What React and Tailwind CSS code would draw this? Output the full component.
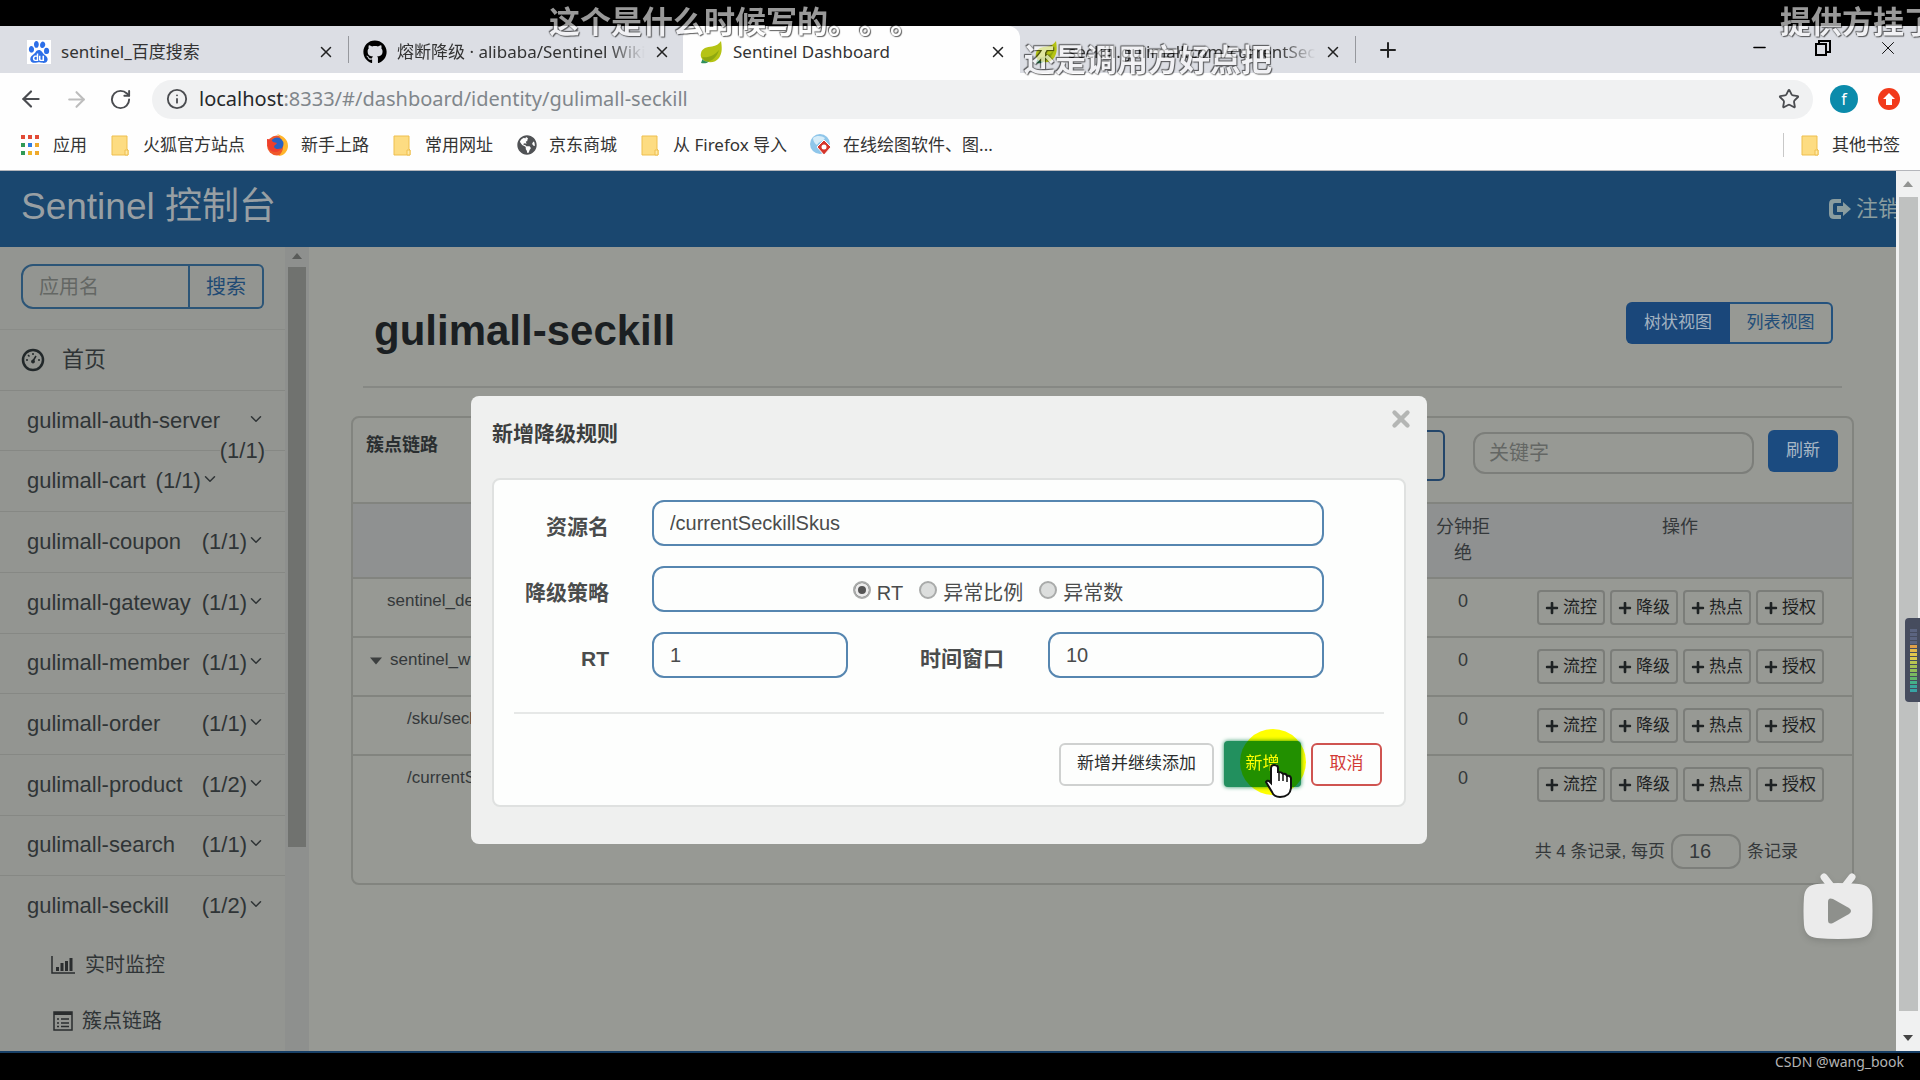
import React, { useState } from 'react';
import { ArrowLeft, ArrowRight, RotateCw, Info, Star, X, Plus, Minus, ChevronDown } from 'lucide-react';
import { FaGithub, FaGlobeAmericas, FaPlus } from 'react-icons/fa';
import { SiBaidu } from 'react-icons/si';

const APPS = [
    { name: 'gulimall-auth-server', count: '(1/1)', wrap: true },
    { name: 'gulimall-cart', count: '(1/1)', inline: true },
    { name: 'gulimall-coupon', count: '(1/1)' },
    { name: 'gulimall-gateway', count: '(1/1)' },
    { name: 'gulimall-member', count: '(1/1)' },
    { name: 'gulimall-order', count: '(1/1)' },
    { name: 'gulimall-product', count: '(1/2)' },
    { name: 'gulimall-search', count: '(1/1)' },
];

const RESOURCES = [
    { name: 'sentinel_de', pad: 'pl-[34px]' },
    { name: 'sentinel_w', pad: 'pl-[17px]', parent: true },
    { name: '/sku/seck', pad: 'pl-[54px]' },
    { name: '/currentS', pad: 'pl-[54px]' },
];

const ACTIONS = ['流控', '降级', '热点', '授权'];
const STRATEGIES = ['RT', '异常比例', '异常数'];
const METER = ['#5b6480', '#5b6480', '#5b6480', '#5b6480', '#e0a04a', '#e0b84a', '#e0c64c', '#d9c94e', '#b9c452', '#a5c055', '#93bd57', '#7ab960', '#62b56a', '#45b089', '#3aa79c', '#38a3a5'];

const Leaf = () => (
    <svg viewBox="0 0 24 24" className="size-6 shrink-0">
        <path d="M22 1c1 6 1.500 12-2 17-3 4-8 5-13 3.500C3 20 1 17 2 13 3 8 8 7 13 6.500 17 6 20 4 22 1z" fill="#b5c314" />
        <path d="M3 17c6 1 12-1 17-7-2 7-7 12-14 11.500L3 17z" fill="#8fa80f" />
        <path d="M2 23c3 .8 6 .3 8-1.500-3 .3-5-.5-6.500-2.500z" fill="#2f8f5b" />
    </svg>
);

const Folder = () => (
    <svg viewBox="0 0 18 21" className="h-[21px] w-[18px] shrink-0">
        <path d="M1 1h15v13l1 1v5H1z" fill="#fddc82" stroke="#eebf4f" />
        <path d="M14 15h3v5h-3z" fill="#ffe9a8" stroke="#eebf4f" />
    </svg>
);

const AppsGrid = () => (
    <svg viewBox="0 0 18 20" className="h-5 w-[18px] shrink-0">
        {['#e24a36', '#e24a36', '#e24a36', '#2f9a56', '#2f7de0', '#efa92c', '#2f9a56', '#efb52c', '#efa92c'].map((c, i) => (
            <rect key={i} x={(i % 3) * 7} y={Math.floor(i / 3) * 8} width="4" height="4" fill={c} />
        ))}
    </svg>
);

const Firefox = () => (
    <svg viewBox="0 0 24 24" className="size-6 shrink-0">
        <circle cx="12" cy="12.500" r="10" fill="#f0582a" />
        <path d="M12 1c6 2 11 5 11 12 0 5-4 10-10 10C20 19 20 8 12 1z" fill="#ffb52b" />
        <circle cx="12" cy="11" r="6.500" fill="#2862c4" />
        <path d="M2 6c3 0 5 1 6 3l4 1c-1 2-3 2-3 4 2 3 5 2 7 1-1 5-10 6-13-1-1-3-1-5-1-8z" fill="#ee3f2c" />
    </svg>
);

const DrawTool = () => (
    <svg viewBox="0 0 24 24" className="size-6 shrink-0">
        <circle cx="11" cy="11" r="10" fill="#8fc6ea" />
        <path d="M4 5c4-3 9-2 12 0-2 4-6 3-8 7-2-1-4-4-4-7z" fill="#d6ecf8" />
        <path d="M15 7l7 7-7 8-7-8z" fill="#d4362c" stroke="#fff" />
        <circle cx="15" cy="14" r="2.500" fill="#fff" />
    </svg>
);

const LogoutIcon = () => (
    <svg viewBox="0 0 24 22" className="h-[22px] w-6 shrink-0" fill="currentColor">
        <path d="M13 1v4H7Q5 5 5 7v8q0 2 2 2h6v4H6q-5 0-5-5V6q0-5 5-5z" />
        <path d="M9 8h6V4l8 7-8 7v-4H9z" />
    </svg>
);

const Gauge = () => (
    <svg viewBox="0 0 24 24" className="size-6 shrink-0" fill="none" stroke="#22282a">
        <circle cx="12" cy="12" r="10" strokeWidth="2.500" />
        <path d="M12 13l3-5" strokeWidth="1.500" />
        <path d="M5 12h2M17 12h2M7 7l1.500 1.500M12 5v2" strokeWidth="1.500" />
        <circle cx="12" cy="13.500" r="1.500" fill="#22282a" />
    </svg>
);

const Bars = () => (
    <svg viewBox="0 0 24 18" className="h-[18px] w-6 shrink-0" fill="none" stroke="#2a2d2e">
        <path d="M1 0v17h23" strokeWidth="1.500" />
        <path d="M6.500 15v-4M11 15V7M15.500 15V5M20 15V2" strokeWidth="3" />
    </svg>
);

const ListIcon = () => (
    <svg viewBox="0 0 20 20" className="size-5 shrink-0" fill="none" stroke="#2a2d2e">
        <path d="M1 1h18v18H1z" strokeWidth="1.500" />
        <path d="M1 2.500h18" strokeWidth="3" />
        <path d="M4 8h2M4 12h2M4 15.500h2M8 8h8M8 12h8M8 15.500h8" strokeWidth="1.500" />
    </svg>
);

const Triangle = ({ className }) => (
    <svg viewBox="0 0 10 6" className={className} fill="currentColor"><path d="M0 6L5 0l5 6z" /></svg>
);

const HandCursor = () => (
    <svg viewBox="0 0 28 36" className="absolute top-[22px] left-[41px] z-10 h-9 w-7">
        <path
            d="M9 2q-3 0-3 3v15l-2-2q-2-1-3 1l6 10q2 5 8 5 10 0 11-9V15q-1-3-4-2-1-3-4-2-1-2-5-2V5q0-3-4-3z"
            fill="#fff" stroke="#111" strokeWidth="2"
        />
        <path d="M14 10v8M18 12v6M22 13v6" stroke="#111" strokeWidth="1.500" />
    </svg>
);

const TvBadge = () => (
    <svg viewBox="0 0 70 66" className="absolute top-[702px] right-[47px] z-20 h-[66px] w-[70px] drop-shadow-md">
        <path d="M21 4l7 9M49 4l-7 9" stroke="#ebebeb" strokeWidth="7" strokeLinecap="round" />
        <path d="M14 11q21-2 42 0 12 1 13 13 1 14 0 28-1 12-13 13-21 2-42 0Q2 64 1 52 0 38 1 24q1-12 13-13z" fill="#ebebeb" />
        <path d="M25 29q0-5 5-3l16 9q4 3 0 6l-16 9q-5 2-5-3z" fill="#8e908c" />
    </svg>
);

const Tab = ({ icon, title, fade }) => (
    <>
        {icon}
        <span className={`ml-2.5 flex-1 overflow-hidden whitespace-nowrap ${fade ? 'mask-r-from-85%' : ''}`}>{title}</span>
        <button type="button" aria-label="关闭标签页" className="ml-2 shrink-0 text-[#222]"><X size={18} strokeWidth={2} /></button>
    </>
);

const Browser = () => (
    <header className="shrink-0 bg-[#fefefe] font-['Noto_Sans','Noto_Sans_CJK_SC',sans-serif] text-[#333]">
        <div className="flex h-[47px] items-stretch bg-[#dcdee4] text-[17px] leading-6">
            <div className="flex w-[348px] items-center pt-1 pr-[13px] pl-[27px]">
                <Tab icon={<SiBaidu size={24} className="shrink-0 bg-white p-px text-[#2d6fe8]" />} title="sentinel_百度搜索" />
            </div>
            <div className="my-2.5 w-px bg-[#96989d]"></div>
            <div className="flex w-[334px] items-center pt-1 pr-[12px] pl-[14px]">
                <Tab icon={<FaGithub size={24} className="shrink-0 text-black" />} title="熔断降级 · alibaba/Sentinel Wiki" fade />
            </div>
            <div className="flex w-[337px] items-center rounded-t-xl bg-[#fefefe] pt-1 pr-[13px] pl-[16px]">
                <Tab icon={<Leaf />} title="Sentinel Dashboard" />
            </div>
            <div className="flex w-[335px] items-center pt-1 pr-[13px] pl-[14px]">
                <Tab icon={<Leaf />} title="seckill.gulimall.com/currentSeck" fade />
            </div>
            <div className="my-2.5 w-px bg-[#96989d]"></div>
            <button type="button" aria-label="新标签页" className="ml-5 text-[#222]"><Plus size={24} strokeWidth={2} /></button>
            <div className="ml-auto flex items-center gap-[46px] pr-[21px] pb-1 text-black">
                <button type="button" aria-label="最小化"><Minus size={19} strokeWidth={2} /></button>
                <button type="button" aria-label="还原">
                    <svg viewBox="0 0 16 16" className="size-4" fill="none" stroke="currentColor" strokeWidth="2">
                        <path d="M1 4h10v11H1zM4 4V1h11v11h-4" />
                    </svg>
                </button>
                <button type="button" aria-label="关闭"><X size={22} strokeWidth={1} /></button>
            </div>
        </div>

        <div className="flex h-[52px] items-center pl-[18px] text-[#4a4c50]">
            <button type="button" aria-label="后退"><ArrowLeft size={26} /></button>
            <button type="button" aria-label="前进" className="ml-5 text-[#bdbdbd]"><ArrowRight size={25} /></button>
            <button type="button" aria-label="刷新页面" className="ml-5"><RotateCw size={23} strokeWidth={2} /></button>
            <div className="ml-5 flex h-[39px] flex-1 items-center rounded-full bg-[#f0f1f2] pr-[13px] pl-[14px]">
                <Info size={22} className="shrink-0" />
                <p className="ml-[11px] flex-1 text-[20px] leading-7 whitespace-nowrap text-[#80868b]">
                    <span className="text-[#26282b]">localhost</span>:8333/#/dashboard/identity/gulimall-seckill
                </p>
                <button type="button" aria-label="收藏"><Star size={22} strokeWidth={2} /></button>
            </div>
            <span className="ml-[17px] flex size-7 items-center justify-center rounded-full bg-[#0b8bab] text-[16px] leading-6 text-white">f</span>
            <span className="mr-5 ml-5 flex size-[22px] items-center justify-center rounded-full bg-[#f23a1b]">
                <svg viewBox="0 0 12 12" className="size-3" fill="#fff"><path d="M6 0l6 6H9v6H3V6H0z" /></svg>
            </span>
        </div>

        <nav className="flex h-[46px] items-center border-b border-[#b4b6bb] pr-5 pb-[5px] pl-[21px] text-[17px] leading-6 whitespace-nowrap">
            <a href="#" className="flex items-center gap-3.5"><AppsGrid />应用</a>
            <a href="#" className="ml-6 flex items-center gap-3.5"><Folder />火狐官方站点</a>
            <a href="#" className="ml-5 flex items-center gap-3"><Firefox />新手上路</a>
            <a href="#" className="ml-6 flex items-center gap-3.5"><Folder />常用网址</a>
            <a href="#" className="ml-6 flex items-center gap-3"><FaGlobeAmericas size={20} className="text-[#505255]" />京东商城</a>
            <a href="#" className="ml-6 flex items-center gap-3.5"><Folder />从 Firefox 导入</a>
            <a href="#" className="ml-[22px] flex items-center gap-2.5"><DrawTool />在线绘图软件、图...</a>
            <a href="#" className="ml-auto flex items-center gap-[13px] border-l border-[#c8c8c8] pl-[17px]"><Folder />其他书签</a>
        </nav>
    </header>
);

const Sidebar = () => (
    <aside className="flex shrink-0 overflow-hidden bg-[#939591] text-[22px] leading-[30px] text-[#2f3436]">
        <div className="w-[285px]">
            <div className="mt-[17px] ml-[21px] flex h-[45px] w-[243px] text-[20px]">
                <input aria-label="应用名" placeholder="应用名" className="w-[169px] rounded-l-xl border-2 border-[#2c5577] bg-transparent px-4 placeholder:text-[#646764]" />
                <button type="button" className="flex-1 rounded-r-md border-2 border-l-0 border-[#2c5577] text-[#1f4a74]">搜索</button>
            </div>
            <nav className="mt-5 flex h-[607px] flex-col">
                <a href="#" className="flex flex-1 items-center gap-[17px] border-t border-[#8a8c88] pl-[21px]"><Gauge />首页</a>
                {APPS.map((app) => (
                    <a key={app.name} href="#" className="flex flex-1 items-center border-t border-[#868884] pr-5 pl-[27px] whitespace-nowrap">
                        {app.name}
                        {app.wrap ? (
                            <span className="relative ml-auto">
                                <ChevronDown size={18} className="mb-1" />
                                <span className="absolute top-[26px] right-0 bg-[#939591]">{app.count}</span>
                            </span>
                        ) : (
                            <span className={`flex items-center ${app.inline ? 'ml-2.5' : 'ml-auto'}`}>
                                {app.count}<ChevronDown size={18} className="mb-1" />
                            </span>
                        )}
                    </a>
                ))}
                <a href="#" className="flex flex-1 items-center border-t border-[#868884] pr-5 pl-[27px]">
                    gulimall-seckill
                    <span className="ml-auto flex items-center">(1/2)<ChevronDown size={18} className="mb-1" /></span>
                </a>
            </nav>
            <div className="text-[20px]">
                <a href="#" className="mt-3.5 flex h-[30px] items-center gap-2.5 pl-[51px]"><Bars />实时监控</a>
                <a href="#" className="mt-[26px] flex h-[30px] items-center gap-[9px] pl-[53px]"><ListIcon />簇点链路</a>
            </div>
        </div>
        <div className="flex w-6 flex-col items-center bg-[#8e908e]">
            <Triangle className="mt-1.5 mb-2 h-1.5 w-2.5 shrink-0 text-[#5a5c5a]" />
            <div className="h-[580px] w-[18px] shrink-0 bg-[#70726f]"></div>
        </div>
    </aside>
);

const Content = () => (
    <main className="flex-1 overflow-hidden bg-[#979994] px-[42px] text-[18px] leading-[26px] text-[#34383a]">
        <div className="mx-3 flex h-[141px] items-start justify-between border-b-2 border-[#868884] pt-[55px] pr-[9px] pl-[11px]">
            <h1 className="mt-1 text-[42px] leading-[50px] font-bold text-[#1b1f22]">gulimall-seckill</h1>
            <div className="flex h-[42px] text-[17px]">
                <button type="button" className="w-[104px] rounded-l-md bg-[#1a477a] text-[#a3b2c0]">树状视图</button>
                <button type="button" className="w-[103px] rounded-r-md border-2 border-l-0 border-[#24527e] text-[#224d78]">列表视图</button>
            </div>
        </div>

        <section className="mt-7 h-[469px] rounded-lg border-2 border-[#82847f]">
            <div className="flex h-[84px] items-start pt-3 pr-3.5 pl-[13px]">
                <h2 className="mt-0.5 text-[18px] font-bold text-[#2a2e30]">簇点链路</h2>
                <select aria-label="机器" className="mr-7 ml-auto h-[51px] w-[320px] appearance-none rounded-md border-2 border-[#24466a]"></select>
                <input aria-label="关键字" placeholder="关键字" className="mt-0.5 mr-3.5 h-[42px] w-[281px] rounded-xl border-2 border-[#7c7e7a] bg-transparent px-3.5 text-[20px] placeholder:text-[#646764]" />
                <button type="button" className="h-[42px] w-[70px] rounded-md bg-[#1b4b80] text-[17px] text-[#a9b8c6]">刷新</button>
            </div>
            <table className="w-full table-fixed border-collapse">
                <thead>
                    <tr className="h-[75px] border-y-2 border-[#82847f] bg-[#8f9191] align-top">
                        <th></th>
                        <th className="w-[90px] px-4 pt-2.5 font-normal">分钟拒绝</th>
                        <th className="w-[344px] pt-2.5 font-normal">操作</th>
                    </tr>
                </thead>
                <tbody>
                    {RESOURCES.map((row) => (
                        <tr key={row.name} className="h-[59px] border-b-2 border-[#82847f] align-top last:border-b-0">
                            <td className={`pt-[9px] text-[17px] ${row.pad}`}>
                                {row.parent && <Triangle className="mr-2 inline h-3 w-3 rotate-180 text-[#3c3f3f]" />}
                                {row.name}
                            </td>
                            <td className="pt-[9px] text-center">0</td>
                            <td className="pt-[11px] pl-[29px]">
                                <div className="flex gap-[5px]">
                                    {ACTIONS.map((action) => (
                                        <button key={action} type="button" className="flex h-[35px] w-[68px] items-center justify-center gap-1 rounded border-2 border-[#7b7d79] text-[17px] text-[#1e2223]">
                                            <FaPlus size={14} />{action}
                                        </button>
                                    ))}
                                </div>
                            </td>
                        </tr>
                    ))}
                </tbody>
            </table>
            <div className="mt-5 flex items-center justify-end gap-1.5 pr-[54px] text-[17px]">
                <label htmlFor="page-size">共 4 条记录, 每页</label>
                <input id="page-size" defaultValue="16" className="h-[35px] w-[70px] rounded-xl border-2 border-[#7c7e7a] bg-transparent pl-4 text-[20px]" />
                <span>条记录</span>
            </div>
        </section>
    </main>
);

const RuleModal = () => {
    const [strategy, setStrategy] = useState('RT');

    return (
        <div role="dialog" aria-labelledby="rule-title" className="relative h-[448px] w-[956px] rounded-lg bg-[#eff0ef] px-[21px] pt-[22px] text-[20px] leading-[30px] text-[#4a4c4c]">
            <h2 id="rule-title" className="h-[60px] text-[21px] leading-8 font-bold text-[#3c3e3e]">新增降级规则</h2>
            <button type="button" aria-label="关闭对话框" className="absolute top-[10px] right-[13px] text-[#b4b6b4]"><X size={26} strokeWidth={4} /></button>

            <form onSubmit={(e) => e.preventDefault()} className="h-[329px] rounded-lg border-2 border-[#dfe1e0] bg-[#fdfefd] px-5 pt-5">
                <div className="flex items-center">
                    <label htmlFor="resource" className="mt-2 w-[95px] text-right text-[21px] font-bold">资源名</label>
                    <input id="resource" defaultValue="/currentSeckillSkus" className="ml-[43px] h-[46px] w-[672px] rounded-xl border-2 border-[#5686b0] px-4" />
                </div>
                <fieldset className="mt-5 flex items-center">
                    <legend className="sr-only">降级策略</legend>
                    <span className="mt-2 w-[95px] text-right text-[21px] font-bold">降级策略</span>
                    <div className="ml-[43px] flex h-[46px] w-[672px] items-center justify-center gap-4 rounded-xl border-2 border-[#5686b0]">
                        {STRATEGIES.map((name) => (
                            <label key={name} className="flex items-center gap-1.5 pt-2">
                                <input
                                    type="radio"
                                    name="strategy"
                                    checked={strategy === name}
                                    onChange={() => setStrategy(name)}
                                    className="mb-1.5 size-[18px] appearance-none rounded-full border-2 border-[#a9abaa] bg-[#dcdedd] checked:bg-[#555] checked:inset-ring-3 checked:inset-ring-[#ececec]"
                                />
                                {name}
                            </label>
                        ))}
                    </div>
                </fieldset>
                <div className="mt-5 flex items-center">
                    <label htmlFor="rt" className="mt-2 w-[95px] text-right text-[21px] font-bold">RT</label>
                    <input id="rt" defaultValue="1" className="ml-[43px] h-[46px] w-[196px] rounded-xl border-2 border-[#5686b0] px-4" />
                    <label htmlFor="window" className="mt-2 ml-[72px] text-[21px] font-bold">时间窗口</label>
                    <input id="window" defaultValue="10" className="ml-auto mr-[60px] h-[46px] w-[276px] rounded-xl border-2 border-[#5686b0] px-4" />
                </div>

                <div className="mt-[34px] flex items-center justify-end gap-2.5 border-t-2 border-[#e6e8e7] pt-[27px] pr-0.5 text-[17px]">
                    <button type="button" className="h-[43px] w-[155px] rounded-md border-2 border-[#cfd1d0] text-[#2c2e2e]">新增并继续添加</button>
                    <div className="relative isolate">
                        <button type="submit" className="h-[46px] w-[77px] rounded bg-[#22905e] text-white shadow-[0_0_4px_#22905e]">新增</button>
                        <span className="pointer-events-none absolute -top-3 left-4 size-[66px] rounded-full bg-[#ffff00] mix-blend-multiply"></span>
                        <HandCursor />
                    </div>
                    <button type="button" className="h-[43px] w-[71px] rounded-md border-2 border-[#cf5450] text-[#d23a36]">取消</button>
                </div>
            </form>
        </div>
    );
};

const Danmaku = ({ className, children }) => (
    <p className={`pointer-events-none absolute z-30 text-[31px] leading-9 font-bold whitespace-nowrap text-white opacity-60 [text-shadow:0_0_2px_#000,1px_1px_1px_#000,-1px_-1px_1px_#000] [text-spacing-trim:space-all] ${className}`}>
        {children}
    </p>
);

const App = () => {
    return (
        <div className="relative flex h-screen flex-col overflow-hidden bg-black pt-[26px] font-['Liberation_Sans','Noto_Sans_CJK_SC',sans-serif]">
            <Browser />

            <div className="relative flex min-h-0 flex-1 border-b-2 border-[#173f66]">
                <div className="flex min-w-0 flex-1 flex-col">
                    <div className="flex h-[76px] shrink-0 items-center justify-between bg-[#1a476f] pl-[21px] text-[#989fa3]">
                        <span className="pb-1 text-[37px] leading-[48px]">Sentinel 控制台</span>
                        <a href="#" className="flex w-[68px] items-center gap-1 overflow-hidden text-[22px] leading-8 whitespace-nowrap text-[#8a9d9f]"><LogoutIcon />注销</a>
                    </div>
                    <div className="flex min-h-0 flex-1">
                        <Sidebar />
                        <Content />
                    </div>
                </div>

                {/* Page scrollbar */}
                <div className="flex w-6 shrink-0 flex-col items-center bg-[#f0f1f1] pb-2.5">
                    <Triangle className="my-2.5 h-1.5 w-2.5 text-[#929492]" />
                    <div className="mb-6 w-[19px] flex-1 bg-[#bfc1c0]"></div>
                    <Triangle className="h-1.5 w-2.5 rotate-180 text-[#444]" />
                </div>

                <div className="absolute inset-y-0 right-[22px] left-0 flex items-start justify-center pt-[225px]">
                    <RuleModal />
                </div>

                <TvBadge />
                <div className="absolute top-[447px] right-0 flex h-[84px] w-[15px] flex-col justify-center gap-px rounded-l bg-[#464c5e] pr-[3px] pl-[5px]">
                    {METER.map((color, i) => (
                        <span key={i} className="h-[3px]" style={{ backgroundColor: color }}></span>
                    ))}
                </div>
            </div>

            <footer className="h-[27px] shrink-0 pr-4 text-right font-['Noto_Sans',sans-serif] text-[14px] leading-[18px] text-[#b4b4b4]">CSDN @wang_book</footer>

            <Danmaku className="top-[5px] left-[549px]">这个是什么时候写的。。。</Danmaku>
            <Danmaku className="top-[43px] left-[1024px]">还是调用方好点把</Danmaku>
            <Danmaku className="top-[5px] left-[1780px]">提供方挂了</Danmaku>
        </div>
    );
};

export default App;
